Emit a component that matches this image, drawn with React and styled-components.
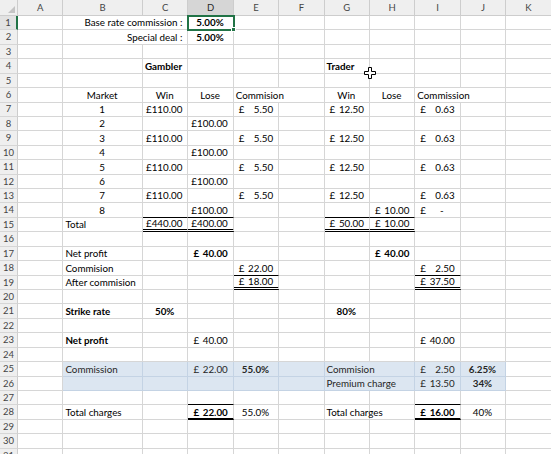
import React from 'react';
import styled, { createGlobalStyle, css } from 'styled-components';

const GlobalStyle = createGlobalStyle`
  html, body {
    margin: 0;
    padding: 0;
    background: #fff;
    overflow: hidden;
  }
`;

const COLS = ['A', 'B', 'C', 'D', 'E', 'F', 'G', 'H', 'I', 'J', 'K'];
const ROW_COUNT = 31;
const GRID = '#d6d6d6';
const BAND = '#dce6f1';
const BAND_LINE = '#c4d3e4';
const GREEN = '#217346';

const Sheet = styled.div`
    position: relative;
    display: grid;
    grid-template-columns: 18px 45.4px 79.6px repeat(9, 45.4px);
    grid-template-rows: 16px repeat(${ROW_COUNT}, 14.433px);
    width: 551px;
    height: 454px;
    overflow: hidden;
    font-family: Lato, 'Liberation Sans', sans-serif;
    font-size: 9.8px;
    color: #000;
`;

const Corner = styled.div`
    position: relative;
    box-sizing: border-box;
    background: #efefef;
    border-right: 1px solid #cdcdcd;
    border-bottom: 1px solid #cdcdcd;
    &::after {
        content: '';
        position: absolute;
        right: 2px;
        bottom: 2px;
        border-left: 7px solid transparent;
        border-bottom: 7px solid #c4c4c4;
    }
`;

const ColHead = styled.div`
    box-sizing: border-box;
    display: flex;
    align-items: center;
    justify-content: center;
    background: ${(p) => (p.$selected ? '#d6d6d6' : '#efefef')};
    border-right: 1px solid #cdcdcd;
    border-bottom: 1px solid #cdcdcd;
    color: ${(p) => (p.$selected ? '#262626' : '#454545')};
    font-size: 9.5px;
`;

const RowHead = styled.div`
    box-sizing: border-box;
    display: flex;
    align-items: center;
    justify-content: center;
    background: ${(p) => (p.$selected ? '#e2e2e2' : '#efefef')};
    border-right: ${(p) => (p.$selected ? `2px solid ${GREEN}` : '1px solid #cdcdcd')};
    border-bottom: 1px solid #d6d6d6;
    color: #454545;
    font-size: 9.5px;
    line-height: 1;
`;

const justify = { left: 'flex-start', center: 'center', right: 'flex-end' };

const bottoms = {
    thin: css`border-bottom: 1px solid #000;`,
    double: css`
        border-bottom: 3px double #000;
        padding-bottom: 0;
    `,
    thick: css`
        border-bottom: 2px solid #000;
        padding-bottom: 0;
    `,
};

const Cell = styled.div`
    position: relative;
    grid-column: span ${(p) => p.$span};
    box-sizing: border-box;
    display: flex;
    align-items: flex-end;
    justify-content: ${(p) => (p.$acc ? 'space-between' : justify[p.$align])};
    padding: ${(p) => (p.$acc || p.$align === 'right' ? '0 5px 1px 5px' : '0 3px 1px 2px')};
    background: ${(p) => (p.$band ? BAND : 'transparent')};
    border-right: 1px solid ${(p) => (p.$band ? BAND_LINE : GRID)};
    border-bottom: 1px solid ${(p) => (p.$band ? BAND_LINE : GRID)};
    color: ${(p) => (p.$band ? '#262626' : '#000')};
    font-weight: ${(p) => (p.$bold ? 700 : 400)};
    line-height: 11px;
    white-space: nowrap;
    ${(p) => p.$bottom && bottoms[p.$bottom]}
    ${(p) =>
        p.$selected &&
        css`
            outline: 2px solid ${GREEN};
            outline-offset: -1px;
            z-index: 2;
            &::after {
                content: '';
                position: absolute;
                right: -3px;
                bottom: -3px;
                width: 5px;
                height: 5px;
                background: ${GREEN};
                border: 1px solid #fff;
                box-sizing: border-box;
            }
        `}
`;

const Dash = styled.span`
    padding-right: ${(p) => (p.$dash ? '11px' : '0')};
`;

const Cursor = styled.svg`
    position: absolute;
    left: 364px;
    top: 67px;
    pointer-events: none;
`;

// cell specs: t = text, a = align, b = bold, acc = accounting value, cur = currency
const n = (t) => ({ t, a: 'center' });
const win = { C: { cur: '£110.00' }, E: { acc: '5.50' }, G: { acc: '12.50' }, I: { acc: '0.63' } };
const lose = { D: { cur: '£100.00' } };

const SHEET = {
    1: { B: { t: 'Base rate commission :', a: 'right', span: 2 }, D: { t: '5.00%', a: 'center', b: true, sel: true } },
    2: { B: { t: 'Special deal :', a: 'right', span: 2 }, D: { t: '5.00%', a: 'center', b: true } },
    4: { C: { t: 'Gambler', b: true }, G: { t: 'Trader', b: true } },
    6: {
        B: n('Market'), C: n('Win'), D: n('Lose'), E: { t: 'Commision', span: 2 },
        G: n('Win'), H: n('Lose'), I: { t: 'Commission', span: 2 },
    },
    7: { ...win, B: n('1') },
    8: { ...lose, B: n('2') },
    9: { ...win, B: n('3') },
    10: { ...lose, B: n('4') },
    11: { ...win, B: n('5') },
    12: { ...lose, B: n('6') },
    13: { ...win, B: n('7') },
    14: {
        B: n('8'), C: { bottom: 'thin' }, D: { cur: '£100.00', bottom: 'thin' },
        G: { bottom: 'thin' }, H: { acc: '10.00', bottom: 'thin' }, I: { acc: '-' },
    },
    15: {
        B: { t: 'Total' }, C: { cur: '£440.00', bottom: 'double' }, D: { cur: '£400.00', bottom: 'double' },
        G: { acc: '50.00', bottom: 'double' }, H: { acc: '10.00', bottom: 'double' },
    },
    17: { B: { t: 'Net profit' }, D: { acc: '40.00', b: true }, H: { acc: '40.00', b: true } },
    18: { B: { t: 'Commision' }, E: { acc: '22.00', bottom: 'thin' }, I: { acc: '2.50', bottom: 'thin' } },
    19: { B: { t: 'After commision' }, E: { acc: '18.00', bottom: 'double' }, I: { acc: '37.50', bottom: 'double' } },
    21: { B: { t: 'Strike rate', b: true }, C: { t: '50%', a: 'center', b: true }, G: { t: '80%', a: 'center', b: true } },
    23: { B: { t: 'Net profit', b: true }, D: { acc: '40.00' }, I: { acc: '40.00' } },
    25: {
        B: { t: 'Commission' }, D: { acc: '22.00' }, E: { t: '55.0%', a: 'center', b: true },
        G: { t: 'Commision', span: 2 }, I: { acc: '2.50' }, J: { t: '6.25%', a: 'center', b: true },
    },
    26: { G: { t: 'Premium charge', span: 2 }, I: { acc: '13.50' }, J: { t: '34%', a: 'center', b: true } },
    27: { D: { bottom: 'thin' }, I: { bottom: 'thin' } },
    28: {
        B: { t: 'Total charges' }, D: { acc: '22.00', b: true, bottom: 'thick' }, E: { t: '55.0%', a: 'center' },
        G: { t: 'Total charges' }, I: { acc: '16.00', b: true, bottom: 'thick' }, J: { t: '40%', a: 'center' },
    },
};

const isBand = (r, i) => (r === 25 || r === 26) && i >= 1 && i <= 9;

const renderRow = (r) => {
    const spec = SHEET[r] || {};
    const cells = [
        <RowHead key={`h${r}`} $selected={r === 1}>
            {r}
        </RowHead>,
    ];
    let skip = 0;
    COLS.forEach((c, i) => {
        if (skip > 0) {
            skip -= 1;
            return;
        }
        const s = spec[c] || {};
        const span = s.span || 1;
        skip = span - 1;
        let content = s.t || null;
        if (s.acc) {
            content = (
                <>
                    <span>£</span>
                    <Dash $dash={s.acc === '-'}>{s.acc}</Dash>
                </>
            );
        } else if (s.cur) {
            content = s.cur;
        }
        cells.push(
            <Cell
                key={`${c}${r}`}
                $span={span}
                $align={s.cur ? 'right' : s.a || 'left'}
                $acc={!!s.acc}
                $bold={s.b}
                $bottom={s.bottom}
                $band={isBand(r, i)}
                $selected={s.sel}
            >
                {content}
            </Cell>
        );
    });
    return cells;
};

const App = () => {
    const rows = [];
    for (let r = 1; r <= ROW_COUNT; r += 1) rows.push(...renderRow(r));

    return (
        <>
            <GlobalStyle />
            <Sheet>
                <Corner />
                {COLS.map((c) => (
                    <ColHead key={c} $selected={c === 'D'}>
                        {c}
                    </ColHead>
                ))}
                {rows}
                <Cursor width="12" height="12" viewBox="0 0 12 12">
                    <path
                        d="M4.5 0.5h3v4h4v3h-4v4h-3v-4h-4v-3h4z"
                        fill="#fff"
                        stroke="#000"
                        strokeWidth="1"
                    />
                </Cursor>
            </Sheet>
        </>
    );
};

export default App;
